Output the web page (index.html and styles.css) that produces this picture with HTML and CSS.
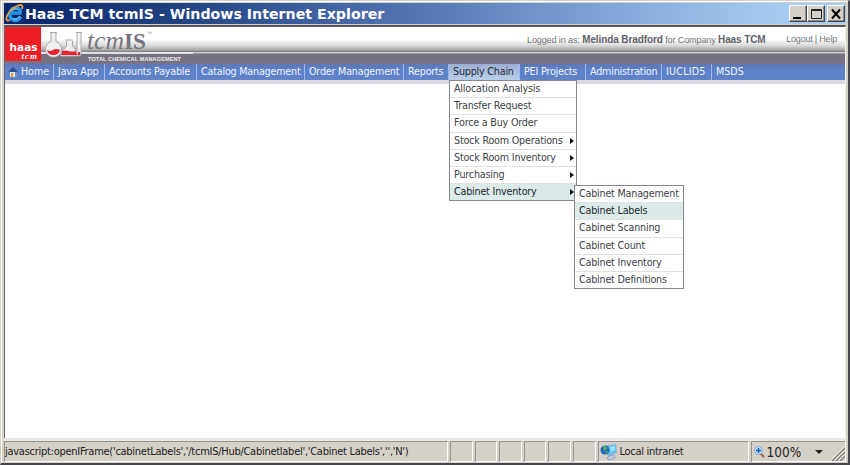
FILE: index.html
```html
<!DOCTYPE html>
<html lang="en">
<head>
<meta charset="utf-8">
<title>Haas TCM tcmIS</title>
<link rel="stylesheet" href="styles.css">
</head>
<body>
<div class="window">
  <div class="titlebar">
    <svg class="ie" width="20" height="21" viewBox="0 0 20 21"><path d="M16 14Q12 19 8 17Q4 15 5 10Q6 5 11 5Q16 5 15 10H6" fill="none" stroke="#2498ee" stroke-width="3.4"/><path d="M15 13Q12 17 8 16M7 8Q10 4 13 7" fill="none" stroke="#9bddff" stroke-width="1"/><path d="M17 6Q19 0 12 3Q5 6 2 13Q0 19 5 17" fill="none" stroke="#ed9d45" stroke-width="1.8"/></svg>
    <span class="title">Haas TCM tcmIS - Windows Internet Explorer</span>
    <div class="controls">
      <span class="ctl"><svg width="17" height="16"><path d="M3 12h8" stroke="#000" stroke-width="2"/></svg></span>
      <span class="ctl"><svg width="17" height="16"><path d="M3.5 3.5h10v9h-10zM3 4.5h11" fill="none" stroke="#222"/></svg></span>
      <span class="ctl close"><svg width="17" height="16"><path d="M4 3.5l8 9M12 3.5l-8 9" stroke="#000" stroke-width="2"/></svg></span>
    </div>
  </div>
  <div class="page">
    <header class="banner">
      <svg class="logo" width="195" height="37" viewBox="0 0 195 37">
        <rect width="36" height="34" fill="#ee1c24"/>
        <text class="haas" x="4.5" y="24" textLength="28">haas</text>
        <text class="tcm" x="16.5" y="32" textLength="15.5">tcm</text>
        <path d="M36 26h152" stroke="#f2f2f4" stroke-width="1.3"/>
        <g fill="#f0f0f2" stroke="#aaa9ae" stroke-width="1">
          <path d="M45 5.500h7M46 6v8.500a8 8 0 1 0 5 0V6"/>
          <path d="M60 13h8M61.500 14v5l-6 8q-1 2 1 2h16q2 0 1-2l-6-8v-5"/>
          <path d="M71 5.500h6M72 6v20q0 3 2 3t2-3V6"/>
        </g>
        <path d="M42 23q3 2 6 0t7 0q-1 5-6.500 5t-6.500-5zM57.500 24q3-1 6 0t7 0l2 4H56zM73 25h2v3h-2z" fill="#e8222d"/>
        <text class="tcm-is" x="82" y="22" textLength="37" lengthAdjust="spacingAndGlyphs">tcm</text>
        <text class="is" x="119" y="22" textLength="22" lengthAdjust="spacingAndGlyphs">IS</text>
        <text class="tm" x="142" y="8">™</text>
        <text class="tag" x="83" y="33.500" textLength="93">TOTAL CHEMICAL MANAGEMENT</text>
      </svg>
      <div class="login"><span class="who">Logged in as: <b>Melinda Bradford</b> for Company <b>Haas TCM</b></span><span class="links">Logout | Help</span></div>
    </header>
    <nav class="nav">
      <span class="item home"><svg width="11" height="12" viewBox="0 0 11 12"><path d="M2 5h7v6H2z" fill="#d9e4f2"/><path d="M0 6l5-5 5 5z" fill="#304f91"/><path d="M3 7h2v4H3z" fill="#e29a40"/><path d="M7 6h2v5H7z" fill="#7190c1"/></svg><span>Home</span></span>
      <span class="item java">Java App</span>
      <span class="item accounts">Accounts Payable</span>
      <span class="item catalog">Catalog Management</span>
      <span class="item order">Order Management</span>
      <span class="item reports">Reports</span>
      <span class="item supply">Supply Chain</span>
      <span class="item pei">PEI Projects</span>
      <span class="item admin">Administration</span>
      <span class="item iuclid">IUCLID5</span>
      <span class="item msds">MSDS</span>
    </nav>
    <main class="content"></main>
  </div>
  <footer class="status">
    <div class="cell url">javascript:openIFrame('cabinetLabels','/tcmIS/Hub/Cabinetlabel','Cabinet Labels','','N')</div>
    <div class="cell small"></div><div class="cell small"></div><div class="cell small"></div><div class="cell small"></div><div class="cell small"></div><div class="cell small"></div>
    <div class="cell zone"><svg width="18" height="18" viewBox="0 0 18 18"><path d="M5 3l11-2 1 9-9 3z" fill="#63bfe9" stroke="#a9bace"/><path d="M9 13l5-1 1 3-6 2-2-2z" fill="#c4d0e0" stroke="#8da1bd"/><circle cx="5" cy="7" r="4.500" fill="#2163be"/><path d="M3 3q5 0 4 3l-3 2zM5 9l3-1-1 3z" fill="#55af54"/><path d="M10 4l5-1v4l-4 2z" fill="#9be4fa"/></svg><span>Local intranet</span></div>
    <div class="cell zoom"><svg width="11" height="12" viewBox="0 0 11 12"><path d="M6 7l4 4" stroke="#a65b50" stroke-width="2"/><circle cx="4.500" cy="4.500" r="4" fill="#c4e3fa" stroke="#83a9d2"/><path d="M2 4.500h5M4.500 2v5" stroke="#1761b8" stroke-width="1.6"/></svg><span>100%</span><i class="down"></i><svg class="grip" width="14" height="14"><path d="M1 14L14 1M5 14l9-9M9 14l5-5" stroke="#8c8981" stroke-width="1.5"/><path d="M0 13L13 0M4 13l9-9M8 13l5-5" stroke="#fff" stroke-width=".8"/></svg></div>
  </footer>
</div>
<div class="menu main-menu">
  <div>Allocation Analysis</div>
  <div>Transfer Request</div>
  <div>Force a Buy Order</div>
  <div class="more">Stock Room Operations</div>
  <div class="more">Stock Room Inventory</div>
  <div class="more">Purchasing</div>
  <div class="more on">Cabinet Inventory</div>
</div>
<div class="menu sub-menu">
  <div>Cabinet Management</div>
  <div class="on">Cabinet Labels</div>
  <div>Cabinet Scanning</div>
  <div>Cabinet Count</div>
  <div>Cabinet Inventory</div>
  <div>Cabinet Definitions</div>
</div>
</body>
</html>
```
FILE: styles.css
```css
* { box-sizing: border-box; }
body { margin: 0; width: 850px; height: 465px; overflow: hidden; font-family: "DejaVu Sans", Verdana, sans-serif; }
svg { display: block; flex: none; }
.window { height: 465px; background: #d5d0c8; border: 1px solid #d5d0c8; border-right: 2px solid #45474a; border-bottom: 2px solid #45474a; padding: 2px 2px 1px 3px; box-shadow: inset 1px 1px #fff; display: flex; flex-direction: column; }
.titlebar { height: 21px; display: flex; align-items: center; background: linear-gradient(90deg, #0a246a, #234583 22%, #5577b6 50%, #8aaede 76%, #a6cbf1 92%); color: #fff; flex: none; }
.ie { margin-left: 1px; }
.title { font-size: 14.2px; font-weight: bold; line-height: 20px; white-space: nowrap; }
.controls { display: flex; margin-left: auto; padding-right: 1px; }
.ctl { width: 18px; height: 17px; background: #d5d0c8; border: 1px solid #fff; border-right-color: #44464a; border-bottom-color: #44464a; box-shadow: inset -1px -1px #918f89; }
.close { margin-left: 2px; }
.page { flex: 1; display: flex; flex-direction: column; margin-top: 1px; border-top: 2px solid #55565a; border-left: 1px solid #66676a; border-right: 1px solid #f3f2ee; min-height: 0; }
.banner { height: 37px; flex: none; display: flex; justify-content: space-between; background: linear-gradient(#fff 0 13px, #f1f1f1 14px, #dedede 18px, #aaa 23px, #77757c 25px, #cccbd0 25px 26px, #77707f 27px 33px, #74748f 37px); }
.haas { font: bold 10.5px "DejaVu Sans", sans-serif; fill: #fff; }
.tcm { font: italic bold 9px "Liberation Serif", serif; fill: #fff; }
.tcm-is { font: italic 25px "Liberation Serif", serif; fill: #77757e; }
.is { font: bold 24px "Liberation Serif", serif; fill: #77757e; }
.tm { font: 5px "Liberation Sans", sans-serif; fill: #888; }
.tag { font: bold 5.6px "Liberation Sans", sans-serif; fill: #eeedf1; }
.login { display: flex; justify-content: space-between; width: 310px; margin-right: 8px; font: 9px/25px "Liberation Sans", Arial, sans-serif; color: #75757b; white-space: nowrap; }
.who { letter-spacing: -.1px; }
.login b { font-size: 10px; color: #62636b; }
.links { font-size: 9px; letter-spacing: -.2px; }
.nav { display: flex; height: 16px; flex: none; background: linear-gradient(#6078b5, #5c82c9 40%, #6082c6); color: #edf3ff; font-size: 9.6px; letter-spacing: -.2px; line-height: 15px; white-space: nowrap; }
.item { flex: none; padding-left: 4px; border-right: 1px solid #9bbaf0; }
.home { width: 49px; display: flex; gap: 2px; padding-left: 3px; letter-spacing: -.1px; }
.home svg { margin-top: 2px; }
.java { width: 51px; }
.accounts { width: 92px; }
.catalog { width: 108px; }
.order { width: 99px; }
.reports { width: 45px; }
.supply { width: 71px; background: linear-gradient(#9dafd1, #b7d0e9); color: #242b38; }
.pei { width: 66px; }
.admin { width: 76px; }
.iuclid { width: 50px; letter-spacing: .2px; }
.msds { border: 0; letter-spacing: 0; }
.content { flex: 1; background: #fff; border-top: 4px solid #d9d9df; }
.status { display: flex; gap: 2px; height: 24px; flex: none; border-top: 3px solid #e9e8e4; font: 11px/18px Tahoma, "DejaVu Sans Condensed", "DejaVu Sans", sans-serif; font-stretch: condensed; color: #222; white-space: nowrap; }
.cell { display: flex; align-items: center; border: 1px solid #96948e; border-right-color: #fff; border-bottom-color: #fff; padding-top: 1px; }
.url { width: 444px; letter-spacing: -.27px; padding-left: 0; }
.small { width: 22.6px; }
.zone { width: 151px; padding-left: 1px; gap: 2px; letter-spacing: -.3px; }
.zoom { flex: 1; padding: 0 0 0 2px; gap: 2px; font-size: 13.5px; position: relative; }
.down { margin-left: 12px; border: 4px solid transparent; border-top-color: #222; border-bottom: 0; }
.grip { margin-left: auto; align-self: flex-end; }
.menu { position: absolute; background: #fff; border: 1px solid #85878d; color: #404249; font-size: 9.6px; letter-spacing: -.2px; line-height: 16px; white-space: nowrap; display: grid; grid-template-columns: minmax(0, 1fr); }
.menu > div { padding-left: 4px; border-bottom: 1px solid #e0e1e3; }
.menu > div:last-child { border-bottom: 0; }
.main-menu { left: 449px; top: 80px; width: 128px; height: 121px; grid-template-rows: repeat(6, 17.2px) 1fr; }
.sub-menu { left: 574px; top: 185px; width: 110px; height: 104px; grid-template-rows: repeat(5, 17.2px) 1fr; }
.menu .on { background: #dcebea; color: #24272d; }
.more { display: flex; align-items: center; justify-content: space-between; padding-right: 2px; }
.more::after { content: ""; border: 3px solid transparent; border-left: 4px solid #111; border-right: 0; }
```
